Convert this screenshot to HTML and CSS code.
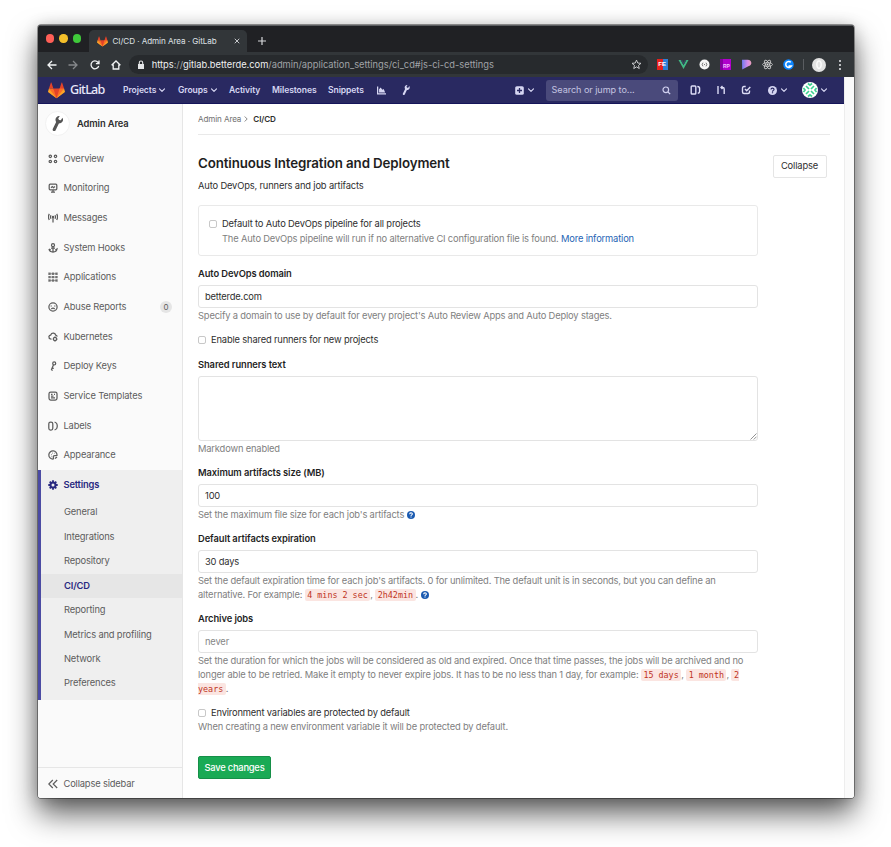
FILE: index.html
```html
<!DOCTYPE html>
<html lang="en">
<head>
<meta charset="utf-8">
<title>CI/CD · Admin Area · GitLab</title>
<link rel="stylesheet" href="styles.css">
</head>
<body>
<svg class="defs" width="0" height="0">
  <symbol id="tanuki" viewBox="0 0 36 36">
    <path fill="#e24329" d="M2 14l9.38 9v-9l-4-12.28c-.205-.632-1.176-.632-1.38 0zM34 14l-9.38 9v-9l4-12.28c.205-.632 1.176-.632 1.38 0zM18 34.38L3 14h30z"/>
    <path fill="#fc6d26" d="M18 34.38L11.38 14H2l4 11zM18 34.38L24.62 14H34l-4 11z"/>
    <path fill="#fca326" d="M2 14L.1 20.16c-.18.565 0 1.2.5 1.56L18 34.38zM34 14l1.9 6.16c.18.565 0 1.2-.5 1.56L18 34.38z"/>
  </symbol>
  <symbol id="chev" viewBox="0 0 8 8"><path fill="none" stroke="currentColor" stroke-width="1.2" stroke-linecap="round" stroke-linejoin="round" d="M1.500 2.800L4 5.300l2.500-2.500"/></symbol>
  <symbol id="wrench" viewBox="0 0 16 16"><path fill="currentColor" transform="rotate(-14 8 8)" d="M14.6 3.2l-2.3 2.2-1.8-.5-.5-1.8L12.3.8C10.600.200 8.700.700 7.600 2.100 6.700 3.300 6.500 4.800 7 6.100L1.800 12.300c-.7.8-.6 1.900.1 2.500.7.600 1.800.500 2.400-.3L9.400 8.400c1.500.400 3.200 0 4.300-1.100 1.100-1.100 1.400-2.700.9-4.100z"/></symbol>
  <symbol id="help" viewBox="0 0 16 16"><circle cx="8" cy="8" r="8" fill="currentColor"/><path fill="none" stroke="var(--mark)" stroke-width="2.100" d="M5.300 6.300C5.300 2.900 10.700 3 10.700 6.100 10.700 7.900 8 7.700 8 10"/><path fill="var(--mark)" d="M6.900 11h2.200v2.100H6.900z"/></symbol>
</svg>

<div class="window">
  <div class="tabs">
    <div class="lights"><i class="red"></i><i class="yellow"></i><i class="green"></i></div>
    <div class="tab">
      <svg class="tab-logo"><use href="#tanuki"/></svg>
      <span class="tab-title">CI/CD · Admin Area · GitLab</span>
      <svg class="tab-x" viewBox="0 0 8 8"><path d="M1 1l6 6M7 1L1 7"/></svg>
    </div>
    <svg class="tab-plus" viewBox="0 0 8 8"><path d="M4 0v8M0 4h8"/></svg>
  </div>

  <div class="toolbar">
    <svg class="tool" viewBox="0 0 10 10"><path d="M9.500 5H1M5 1L1 5l4 4"/></svg>
    <svg class="tool dim" viewBox="0 0 10 10"><path d="M.5 5H9M5 1l4 4-4 4"/></svg>
    <svg class="tool" viewBox="0 0 10 10"><path d="M8.700 6A3.900 3.900 0 1 1 7.900 2.300L8.700 3.300M9 .6v3.100H5.900"/></svg>
    <svg class="tool" viewBox="0 0 10 10"><path d="M.6 5.200L5 1l4.400 4.200M2.200 4.400V9h5.600V4.400"/></svg>
    <div class="address">
      <svg class="lock" viewBox="0 0 8 10"><path fill="#e4e5e7" d="M1 4h6v5H1z"/><path fill="none" stroke="#e4e5e7" stroke-width="1.100" d="M2.300 4.300V2.700a1.700 1.700 0 0 1 3.400 0v1.600"/></svg>
      <span class="url"><b>https</b>://<b>gitlab.betterde.com</b>/admin/application_settings/ci_cd#js-ci-cd-settings</span>
      <svg class="star" viewBox="0 0 12 12"><path d="M6 1.200l1.400 3.200 3.500.3-2.700 2.300.8 3.400L6 8.600l-3 1.800.8-3.400L1.100 4.700l3.500-.3z"/></svg>
    </div>
    <div class="exts">
      <span class="ext fe">FE</span>
      <svg class="ext" viewBox="0 0 11 11"><path fill="#41b883" d="M.5 1h2.200l2.800 5.200L8.300 1h2.200l-5 9z"/><path fill="#34495e" d="M2.700 1h1.600l1.200 2.200L6.700 1h1.600L5.500 6.200z"/></svg>
      <svg class="ext" viewBox="0 0 11 11"><circle cx="5.500" cy="5.500" r="5" fill="#f5f5f5"/><path fill="none" stroke="#555" stroke-width=".8" d="M4 3.700Q2.400 5.500 4 7.300M7 3.700q1.600 1.800 0 3.600M5 5.500h1"/></svg>
      <span class="ext rp">RP</span>
      <svg class="ext" viewBox="0 0 11 11"><defs><linearGradient id="pg" x1="0" x2="1"><stop offset="0" stop-color="#6f7bf0"/><stop offset=".6" stop-color="#d58be8"/><stop offset="1" stop-color="#e8a0b8"/></linearGradient></defs><path fill="url(#pg)" d="M1 .8h5.500c5 0 5 5.700.8 6.500L1.200 10.400z"/></svg>
      <svg class="ext" viewBox="0 0 11 11"><g fill="none" stroke="#d0d0d0" stroke-width=".8"><ellipse cx="5.500" cy="5.500" rx="5" ry="1.900"/><ellipse cx="5.500" cy="5.500" rx="5" ry="1.900" transform="rotate(60 5.500 5.500)"/><ellipse cx="5.500" cy="5.500" rx="5" ry="1.900" transform="rotate(120 5.500 5.500)"/></g><circle cx="5.500" cy="5.500" r="1" fill="#e0e0e0"/></svg>
      <svg class="ext" viewBox="0 0 11 11"><circle cx="5.500" cy="5.500" r="5.300" fill="#0a84ff"/><path fill="none" stroke="#fff" stroke-width="1.500" d="M7.800 3.200a3 3 0 1 0 .5 3.900H5.500"/></svg>
    </div>
    <i class="tool-sep"></i>
    <svg class="profile" viewBox="0 0 14 14"><circle cx="7" cy="7" r="7" fill="#e2e2e2"/><path fill="none" stroke="#fafafa" stroke-width="1.500" d="M7 3c3 0 2.800 7 0 7.500C4.200 10 4 3 7 3z"/></svg>
    <span class="dots"><i></i><i></i><i></i></span>
  </div>

  <div class="viewport">
    <div class="page">
      <header class="navbar">
        <svg class="logo"><use href="#tanuki"/></svg>
        <span class="brand">GitLab</span>
        <nav class="menu">
          <a class="m1">Projects<svg class="chev"><use href="#chev"/></svg></a>
          <a class="m2">Groups<svg class="chev"><use href="#chev"/></svg></a>
          <a class="m3">Activity</a>
          <a class="m4">Milestones</a>
          <a class="m5">Snippets</a>
          <svg class="nav-icon" viewBox="0 0 10 10"><path fill="currentColor" d="M0 .5h1.400v7.600H10v1.400H0zM2.300 7.200V3.500l1.800-1.700 1.800 2.400 1.500-1 1.700 4z"/></svg>
          <svg class="nav-icon nav-wrench"><use href="#wrench"/></svg>
        </nav>
        <div class="plus">
          <svg viewBox="0 0 9 9"><rect x=".2" y=".2" width="8.600" height="8.600" rx="1.600" fill="currentColor"/><path stroke="#292961" stroke-width="1.300" d="M4.500 2v5M2 4.500h5"/></svg>
          <svg class="chev"><use href="#chev"/></svg>
        </div>
        <div class="search"><span>Search or jump to...</span><svg viewBox="0 0 9 9"><circle cx="3.800" cy="3.800" r="2.800"/><path d="M6 6l2.200 2.200"/></svg></div>
        <div class="right-icons">
          <svg class="r1" viewBox="0 0 11 10"><rect x="1.200" y="1" width="4.600" height="8" rx=".8"/><path d="M7.300 1.500q2.300.2 2.300 1.900v3.200q0 1.500-1.800 1.700"/></svg>
          <svg class="r2" viewBox="0 0 10 10"><path d="M2 1v8M5 2.500h1.700q1.500 0 1.500 1.500v5M6.500 1L5 2.500 6.500 4"/></svg>
          <svg class="r3" viewBox="0 0 10 10"><path d="M4.700 1.500H3q-1.500 0-1.500 1.500v4Q1.500 8.500 3 8.500h4q1.500 0 1.500-1.500V5.500M4 4l1.700 1.800L9.300 2"/></svg>
        </div>
        <svg class="nav-help"><use href="#help"/></svg><svg class="chev"><use href="#chev"/></svg>
        <svg class="avatar" viewBox="0 0 16 16"><circle cx="8" cy="8" r="8" fill="#fff"/><g stroke="#3ccf91" stroke-width="1.700" fill="none"><path d="M4 4l3 3M12 4L9 7M4 12l3-3M12 12L9 9M6 1.500l2 1.700 2-1.700M6 14.500l2-1.700 2 1.700M1.500 6l1.500 2-1.500 2M14.500 6L13 8l1.500 2"/></g></svg><svg class="chev"><use href="#chev"/></svg>
      </header>

      <div class="columns">
        <aside class="sidebar">
          <div class="context"><span class="context-icon"><svg><use href="#wrench"/></svg></span>Admin Area</div>
          <ul class="items">
            <li><svg viewBox="0 0 10 10"><g class="s"><circle cx="2.300" cy="2.300" r="1.200"/><circle cx="7.500" cy="2.300" r="1.200"/><circle cx="2.300" cy="7.500" r="1.200"/><circle cx="7.500" cy="7.500" r="1.200"/></g></svg>Overview</li>
            <li><svg viewBox="0 0 10 10"><g class="s"><rect x="1.200" y="1.200" width="7.600" height="5.600" rx="1"/><path d="M3 9h4M5 7v2M3 4.700l1.300-1.200L5.500 4.700 7 3.500"/></g></svg>Monitoring</li>
            <li><svg viewBox="0 0 10 10"><g class="s"><path d="M1.300.9Q-.5 4 1.300 7M8.700.9q1.800 3.100 0 6.100M3 2.300q-1 1.700 0 3.400M7 2.300q1 1.700 0 3.400M5 4.500v5"/><circle cx="5" cy="4" r=".6"/></g></svg>Messages</li>
            <li><svg viewBox="0 0 10 10"><g class="s"><circle cx="5" cy="2.200" r="1.500"/><path d="M5 3.800v5M3 5h4M1 6q.4 3 4 3t4-3L7.300 7M1 6l1.700 1"/></g></svg>System Hooks</li>
            <li><svg viewBox="0 0 10 10"><path fill="currentColor" d="M.3.500h2.400v2.400H.3zM3.800.5h2.400v2.400H3.800zM7.300.5h2.400v2.400H7.300zM.3 3.900h2.400v2.400H.3zM3.800 3.900h2.400v2.400H3.800zM7.300 3.900h2.400v2.400H7.300zM.3 7.300h2.400v2.400H.3zM3.800 7.300h2.400v2.400H3.800zM7.300 7.300h2.400v2.400H7.300z" opacity=".8"/><path stroke="currentColor" stroke-width=".5" d="M1 1.700h8M1 5.100h8M1 8.500h8"/></svg>Applications</li>
            <li><svg viewBox="0 0 10 10"><g class="s"><circle cx="5" cy="5" r="4.100"/><path d="M3.300 7Q5 5.400 6.700 7M3.200 3.400v1M6.800 3.400v1"/></g></svg>Abuse Reports<span class="badge">0</span></li>
            <li><svg viewBox="0 0 10 10"><g class="s"><path d="M3.500 7H2.700Q.7 6.500.9 4.500 1.300 3 2.700 3 3.500.9 5.600 1.200q1.700.4 2.100 2Q9 3.500 9.200 4.700"/><circle cx="7" cy="7" r="1.600"/><path d="M7 4.600v1M7 8.500v1M4.800 7H5.500M8.600 7h.8"/></g></svg>Kubernetes</li>
            <li><svg viewBox="0 0 10 10"><g class="s"><circle cx="6.200" cy="2.400" r="1.500"/><path d="M5.500 3.800L3.300 9M4.200 6.600l1.600.8M3.300 9l1.400.4"/></g></svg>Deploy Keys</li>
            <li><svg viewBox="0 0 10 10"><g class="s"><rect x="1" y="1" width="8" height="8" rx="1.700"/><path d="M3 3.400h1.500M3 5h2.500M3 6.800h4M6 3.400h1"/></g></svg>Service Templates</li>
            <li><svg viewBox="0 0 10 10"><g class="s"><rect x=".8" y="1" width="4" height="8" rx="1.800"/><path d="M6.600 1Q9.200 2 9.200 4v2q0 2-2.600 3"/></g></svg>Labels</li>
            <li><svg viewBox="0 0 10 10"><g class="s"><path d="M9 5.500A4.100 4.100 0 1 0 5 9.100Q6 8.500 5.300 7.300 5 5.500 7 5.700z"/><path d="M3 4.500h.5M4.500 3h.5M6.600 3.300h.4M3 6.500h.4M7 8.500L9 7"/></g></svg>Appearance</li>
          </ul>
          <div class="active-group">
            <div class="active-head"><svg viewBox="0 0 10 10"><circle cx="5" cy="5" r="2.500" fill="none" stroke="currentColor" stroke-width="2"/><path stroke="currentColor" stroke-width="1.800" d="M5 .3v2M5 7.700v2M.3 5h2M7.700 5h2M1.700 1.700L3 3M7 7l1.300 1.300M8.300 1.700L7 3M3 7L1.700 8.300"/></svg>Settings</div>
            <ul class="sub">
              <li>General</li><li>Integrations</li><li>Repository</li><li class="on">CI/CD</li><li>Reporting</li><li>Metrics and profiling</li><li>Network</li><li>Preferences</li>
            </ul>
          </div>
          <div class="collapse-side"><svg viewBox="0 0 10 10"><path d="M4.800 1l-4 4 4 4M9.200 1l-4 4 4 4"/></svg>Collapse sidebar</div>
        </aside>

        <main class="content">
          <div class="crumbs"><span>Admin Area</span><svg viewBox="0 0 8 8"><path d="M2.700 1.500L5.200 4 2.700 6.500"/></svg><b>CI/CD</b></div>
          <section class="settings">
            <button class="btn-collapse">Collapse</button>
            <h4>Continuous Integration and Deployment</h4>
            <p class="lead">Auto DevOps, runners and job artifacts</p>
            <form class="form">
              <div class="card">
                <label class="check"><i></i><span>Default to Auto DevOps pipeline for all projects</span></label>
                <p class="help inset">The Auto DevOps pipeline will run if no alternative CI configuration file is found. <a>More information</a></p>
              </div>
              <label class="title">Auto DevOps domain</label>
              <div class="input">betterde.com</div>
              <p class="help">Specify a domain to use by default for every project's Auto Review Apps and Auto Deploy stages.</p>
              <label class="check spaced"><i></i><span>Enable shared runners for new projects</span></label>
              <label class="title">Shared runners text</label>
              <div class="input area"><svg viewBox="0 0 7 7"><path d="M.5 6.500l6-6M3.700 6.500l2.800-2.800"/></svg></div>
              <p class="help">Markdown enabled</p>
              <label class="title">Maximum artifacts size (MB)</label>
              <div class="input">100</div>
              <p class="help">Set the maximum file size for each job's artifacts <svg class="q"><use href="#help"/></svg></p>
              <label class="title">Default artifacts expiration</label>
              <div class="input">30 days</div>
              <p class="help">Set the default expiration time for each job's artifacts. 0 for unlimited. The default unit is in seconds, but you can define an<br>alternative. For example: <code>4 mins 2 sec</code>, <code>2h42min</code>. <svg class="q"><use href="#help"/></svg></p>
              <label class="title">Archive jobs</label>
              <div class="input placeholder">never</div>
              <p class="help">Set the duration for which the jobs will be considered as old and expired. Once that time passes, the jobs will be archived and no<br>longer able to be retried. Make it empty to never expire jobs. It has to be no less than 1 day, for example: <code>15 days</code>, <code>1 month</code>, <code>2<br>years</code>.</p>
              <label class="check spaced"><i></i><span>Environment variables are protected by default</span></label>
              <p class="help">When creating a new environment variable it will be protected by default.</p>
              <button class="save">Save changes</button>
            </form>
          </section>
        </main>
      </div>
    </div>
    <div class="scroll"></div>
  </div>
</div>
</body>
</html>
```

FILE: styles.css
```css
* { box-sizing: border-box; }
html, body { margin: 0; height: 847px; overflow: hidden; background: #fff; }
body { padding: 25px 0 0 38px; font: 9.33px/14px Inter, "Liberation Sans", sans-serif; color: #2e2e2e; }
p, ul, h4 { margin: 0; padding: 0; list-style: none; }
svg { display: block; flex: none; }
.defs { position: absolute; }

.window { width: 816px; height: 773px; border-radius: 3px; overflow: hidden; background: #fff; box-shadow: 0 0 0 .7px rgba(0,0,0,.5), 0 16px 30px rgba(0,0,0,.62), 0 2px 16px rgba(0,0,0,.2); }
.tabs { height: 27px; background: #202124; display: flex; align-items: flex-end; border-top: 1px solid #5b5d60; }
.lights { display: flex; gap: 5px; padding: 0 8px; height: 27px; align-items: center; width: 51px; }
.lights i { width: 8.3px; height: 8.3px; border-radius: 50%; flex: none; }
.red { background: #ff5f57; }
.yellow { background: #f4bf2a; }
.green { background: #3fc93a; }
.tab { width: 158px; height: 22px; border-radius: 5px 5px 0 0; background: #323639; display: flex; align-items: center; padding: 0 7px 0 8px; }
.tab-logo { width: 11px; height: 11px; }
.tab-title { margin-left: 4.5px; flex: 1; color: #dfe1e5; font-size: 8.1px; letter-spacing: -.06px; white-space: nowrap; }
.tab-x { width: 6px; height: 6px; }
.tab-x path, .tab-plus path { stroke: #d5d7da; stroke-width: 1.2; }
.tab-plus { width: 8px; height: 8px; margin: 0 0 7px 11px; }

.toolbar { height: 25px; background: #323639; display: flex; align-items: center; padding-left: 9px; }
.tool { width: 10px; height: 10px; margin-right: 11.3px; fill: none; stroke: #f1f3f4; stroke-width: 1.3; }
.dim { stroke: #85888b; }
.address { width: 518.5px; height: 19px; border-radius: 10px; background: #272a2d; display: flex; align-items: center; padding: 0 6px 0 8px; margin-left: -3px; }
.lock { width: 8px; height: 10px; margin-right: 6.5px; }
.url { flex: 1; color: #a0a3a7; font-size: 9.3px; white-space: nowrap; }
.url b { font-weight: 400; color: #f0f1f2; }
.star { width: 11px; height: 11px; fill: none; stroke: #d5d7da; stroke-width: 1; }
.exts { display: flex; gap: 10.1px; margin-left: 9px; }
.ext { width: 11px; height: 11px; font: 700 6px/11px "Liberation Sans", sans-serif; color: #fff; text-align: center; }
.fe { background: linear-gradient(90deg, #e8201c 55%, #2e7fd8 55%); }
.rp { background: linear-gradient(90deg, #85009e 25%, #b000cc 25%); line-height: 14px; font-size: 5px; color: #f4c0ff; padding-left: 2px; }
.tool-sep { width: 1px; height: 11px; background: #5a5d61; margin: 0 8px 0 9px; }
.profile { width: 14px; height: 14px; }
.dots { display: grid; gap: 2px; margin-left: 13px; }
.dots i { width: 2px; height: 2px; border-radius: 50%; background: #e8eaed; }

.viewport { height: 721px; display: flex; }
.scroll { flex: 1; border-left: 1px solid #ededed; background: #fafafa; }
.page { width: 806px; display: flex; flex-direction: column; }
.navbar { height: 27px; background: #292961; border-bottom: 1px solid #15155a; color: #d6d6f2; display: flex; align-items: center; padding-left: 10px; font-weight: 600; font-size: 8.55px; letter-spacing: -.07px; white-space: nowrap; }
.logo { width: 17px; height: 17px; }
.brand { font: 500 12.6px/18px "Noto Sans", sans-serif; color: #e8e8fa; width: 52px; padding-left: 5px; letter-spacing: -.75px; }
.menu { display: flex; align-items: center; width: 398px; padding-left: 6px; margin-right: -.5px; }
.menu a { display: flex; align-items: center; gap: 2px; }
.m1 { width: 55px; } .m2 { width: 51px; } .m3 { width: 43px; } .m4 { width: 56px; } .m5 { width: 49px; }
.chev { width: 8px; height: 8px; }
.nav-icon { width: 9px; height: 9px; }
.nav-wrench { width: 10px; height: 10px; margin-left: 15px; }
.plus { display: flex; gap: 3px; width: 31px; align-items: center; }
.plus svg:first-child { width: 9px; height: 9px; }
.search { width: 132px; height: 21px; border-radius: 3px; background: #4a4a7b; display: flex; align-items: center; justify-content: space-between; padding: 0 7px 0 6px; font-weight: 400; font-size: 9.1px; letter-spacing: -.05px; color: #c4c4e0; }
.search svg { width: 9px; height: 9px; fill: none; stroke: #d1d1f0; stroke-width: 1.2; }
.right-icons { display: flex; align-items: center; width: 90px; padding-left: 12px; }
.right-icons svg { width: 11px; height: 10px; fill: none; stroke: #dcdcf5; stroke-width: 1.4; }
.right-icons .r2, .right-icons .r3 { margin-left: 15.3px; width: 10px; }
.nav-help { width: 9px; height: 9px; margin-right: 3px; --mark: #292961; }
.avatar { width: 16px; height: 16px; margin-left: 14px; margin-right: 2px; }

.columns { flex: 1; display: flex; }
.sidebar { width: 145px; background: #fafafa; border-right: 1px solid #e6e6e6; display: flex; flex-direction: column; color: #5c5c5c; letter-spacing: -.16px; }
.context { height: 39.7px; display: flex; align-items: center; padding-left: 7px; gap: 7px; font-weight: 600; color: #2e2e2e; letter-spacing: -.1px; }
.context-icon { width: 25px; height: 25px; border-radius: 50%; background: #fff; border: 1px solid #f2f2f2; display: grid; place-items: center; color: #555; }
.context-icon svg { width: 15px; height: 15px; }
.items li { height: 29.7px; display: flex; align-items: center; padding-left: 10px; }
.items svg, .active-head svg, .collapse-side svg { width: 10px; height: 10px; margin-right: 5.5px; }
.s { fill: none; stroke: currentColor; stroke-width: 1.25; }
.badge { margin-left: auto; margin-right: 10px; width: 12px; height: 12px; border-radius: 6px; background: #e5e5e5; text-align: center; font-size: 8px; line-height: 12px; }
.active-group { height: 230px; background: #efefef; border-left: 3px solid #4b4ba3; }
.active-head { height: 30.1px; display: flex; align-items: center; padding-left: 7px; font-weight: 600; color: #292980; }
.sub li { height: 24.45px; line-height: 24.45px; padding-left: 23px; }
.sub .on { background: #e6e6e6; color: #292980; font-weight: 600; }
.collapse-side { margin-top: auto; height: 31px; border-top: 1px solid #e6e6e6; display: flex; align-items: center; padding: 1px 0 0 10px; }
.collapse-side svg { fill: none; stroke: currentColor; stroke-width: 1.2; }

.content { flex: 1; padding: 0 14px 0 15px; }
.crumbs { height: 31px; display: flex; align-items: center; border-bottom: 1px solid #e9e9e9; font-size: 8.1px; letter-spacing: -.12px; color: #707070; }
.crumbs b { color: #2e2e2e; font-weight: 600; }
.crumbs svg { width: 8px; height: 8px; fill: none; stroke: #888; margin: 0 3px 0 1px; }
.settings { padding-top: 18px; }
.btn-collapse { float: right; width: 54px; height: 23px; margin: 1.5px 3.5px 0 0; border: 1px solid #e5e5e5; border-radius: 2px; background: #fff; font: 9.33px/14px Inter, sans-serif; letter-spacing: -.13px; padding: 0; color: #2e2e2e; }
h4 { font-size: 13.33px; line-height: 20px; font-weight: 600; letter-spacing: -.12px; color: #1f1f1f; }
.lead { padding-top: 6px; letter-spacing: -.15px; height: 19px; }
.form { width: 560px; margin-top: 13px; white-space: nowrap; letter-spacing: -.16px; }
.card { height: 51px; border: 1px solid #e9e9e9; border-radius: 3px; padding: 11px 10px; }
.title { display: block; margin: 11px 0 4px; font-weight: 600; letter-spacing: -.08px; color: #1f1f1f; }
.input { height: 23px; border: 1px solid #e3e3e3; border-radius: 3px; padding: 4px 6px; color: #2e2e2e; }
.placeholder { color: #868686; }
.area { height: 65px; display: flex; align-items: flex-end; justify-content: flex-end; padding: 0; }
.area svg { width: 7px; height: 7px; stroke: #777; stroke-width: .8; }
.help { color: #808080; padding-top: 1px; margin-bottom: -1px; letter-spacing: -.16px; }
.help a { color: #1f65b5; }
.inset { padding-left: 13px; }
.check { display: flex; align-items: center; height: 14px; color: #2e2e2e; }
.check i { width: 8px; height: 8px; border: 1px solid #c8c8c8; border-radius: 2px; margin-right: 5px; background: #fff; }
.spaced { margin-top: 11px; }
.spaced + .help { padding-top: 0; margin-bottom: 0; }
.q { display: inline-block; width: 8px; height: 8px; vertical-align: -1px; color: #1b5bb1; --mark: #fff; }
code { font: 8.4px/12px "DejaVu Sans Mono", monospace; letter-spacing: 0; color: #c0341d; background: #fbe5e1; border-radius: 2px; padding: 1px 2.5px; }
.save { width: 73px; height: 23px; margin-top: 22px; border: 1px solid #168f48; border-radius: 2px; background: #1aaa55; color: #fff; font: 500 9.33px/14px Inter, sans-serif; letter-spacing: -.22px; padding: 0; display: block; }
```
